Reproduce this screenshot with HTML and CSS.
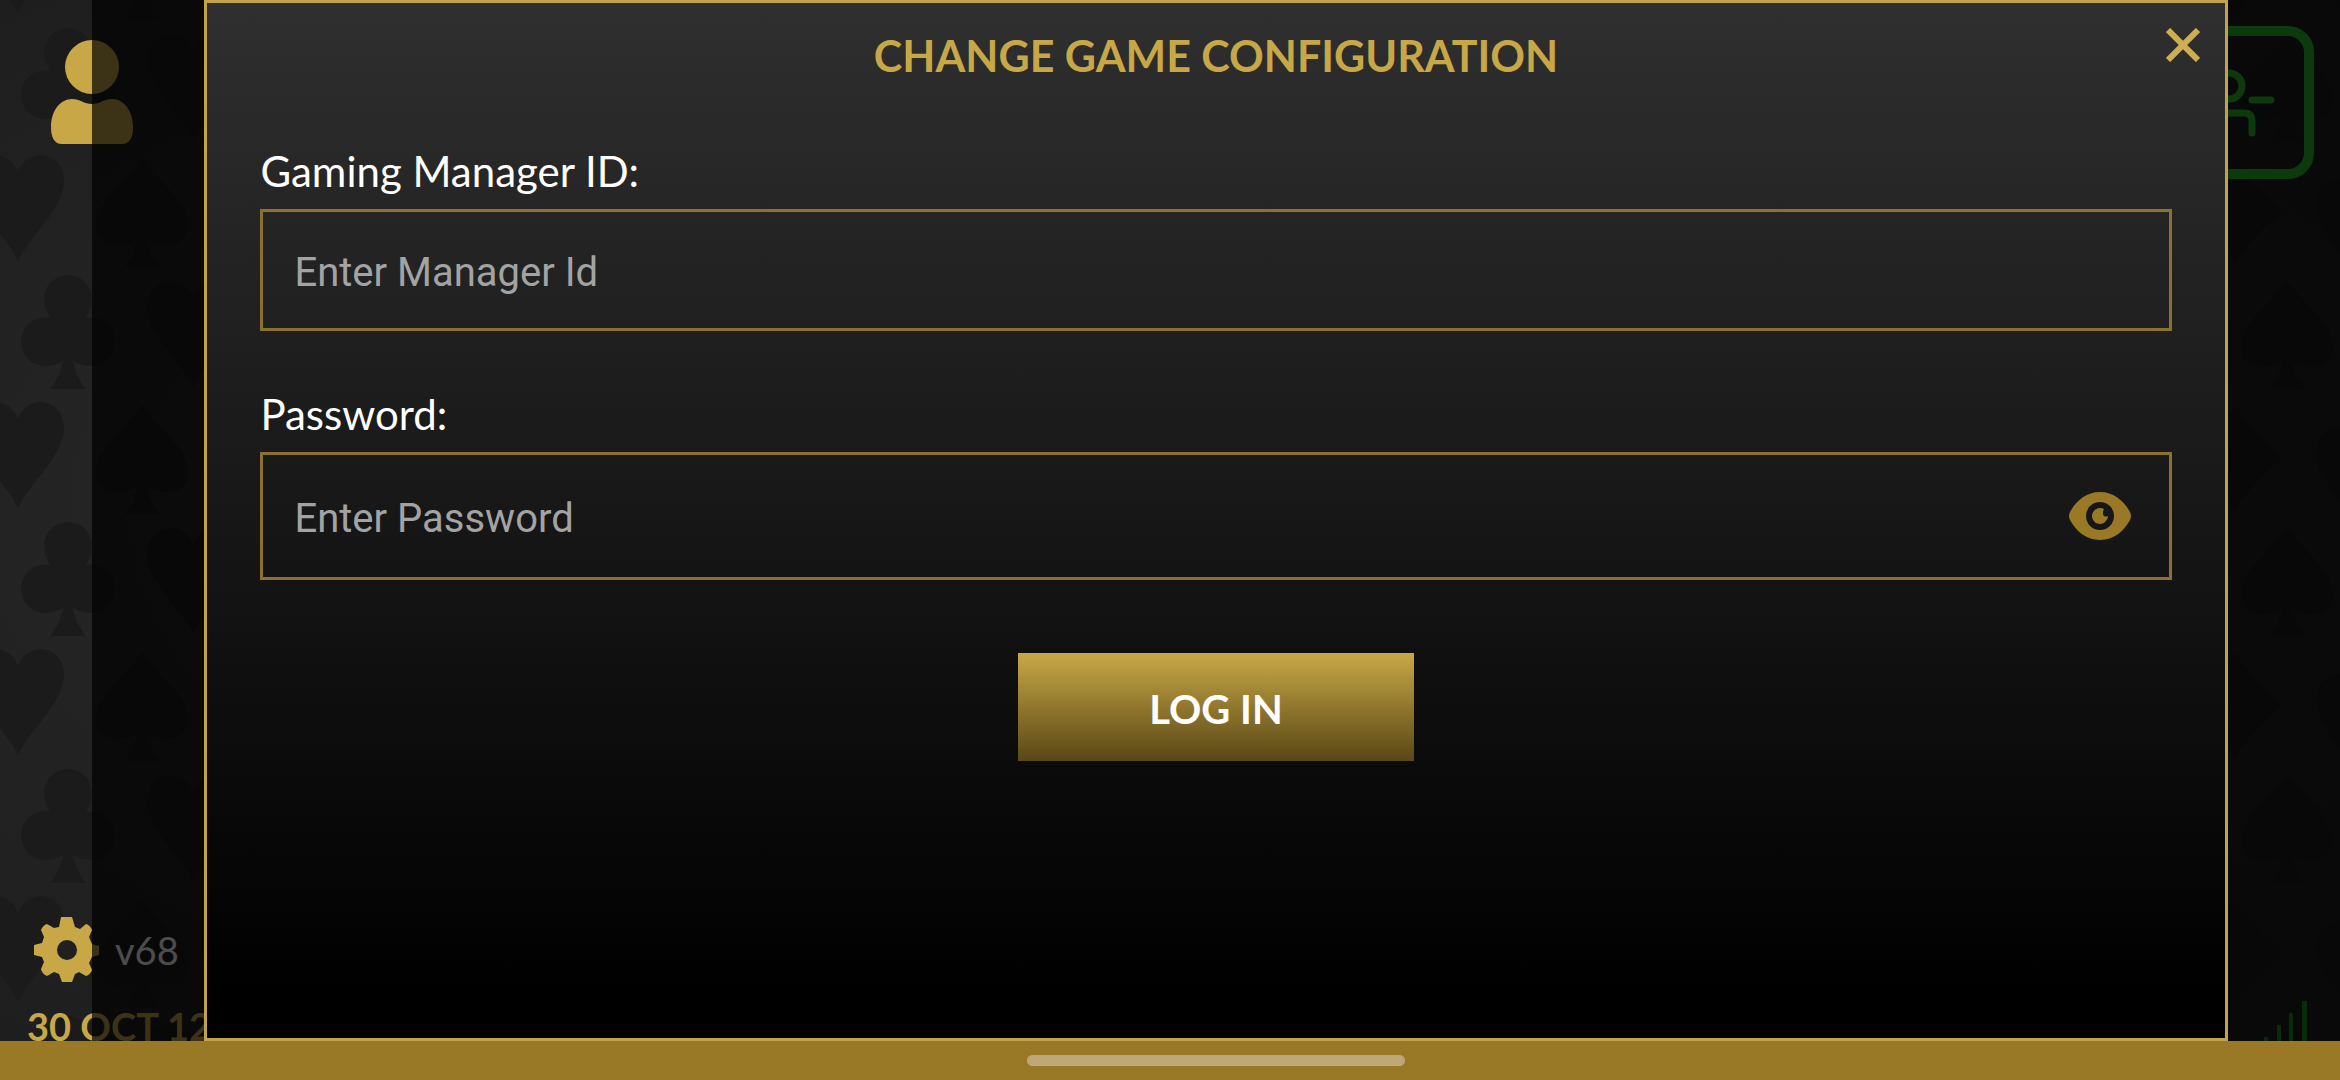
FILE: index.html
```html
<!DOCTYPE html>
<html lang="en">
<head>
    <meta charset="UTF-8">
    <meta name="viewport" content="width=device-width, initial-scale=1.0">
    <title>Change Game Configuration</title>
    <link rel="stylesheet" href="styles.css">
</head>
<body>
    <div class="screen">
        <!-- card suits on the table background -->
        <svg class="suits suits-left" aria-hidden="true">
            <defs>
                <path id="heart" d="M0 107C-10 82 -46 55 -46 26C-46 8 -34 0 -22 0C-12 0 -3 7 0 17C3 7 12 0 22 0C34 0 46 8 46 26C46 55 10 82 0 107Z"/>
                <path id="spade" d="M0 0C12 22 46 42 46 68C46 82 36 88 26 88C17 88 10 86 5 82C7 94 12 104 18 110H-18C-12 104 -7 94 -5 82C-10 86 -17 88 -26 88C-36 88 -46 82 -46 68C-46 42 -12 22 0 0Z"/>
                <path id="club" d="M0 0C13 0 24 10 24 24C24 33 20 39 18 43C34 40 47 51 47 66C47 81 36 91 23 91C14 91 9 88 5 86C7 98 12 106 18 114H-18C-12 106 -7 98 -5 86C-9 88 -14 91 -23 91C-36 91 -47 81 -47 66C-47 51 -34 40 -18 43C-20 39 -24 33 -24 24C-24 10 -13 0 0 0Z"/>
                <path id="diamond" d="M0 0C12 20 30 38 48 53C30 68 12 86 0 106C-12 86 -30 68 -48 53C-30 38 -12 20 0 0Z"/>
                <pattern id="suitsLeft" width="250" height="247" y="150" patternUnits="userSpaceOnUse">
                    <use href="#heart" x="18" y="5"/>
                    <use href="#spade" x="142" y="7"/>
                    <use href="#club" x="68" y="125"/>
                    <use href="#heart" x="193" y="131"/>
                </pattern>
                <pattern id="suitsRight" width="250" height="247" y="150" patternUnits="userSpaceOnUse">
                    <use href="#diamond" x="15" y="8"/>
                    <use href="#spade" x="67" y="129"/>
                    <use href="#heart" x="142" y="30"/>
                </pattern>
            </defs>
            <rect width="100%" height="100%" fill="url(#suitsLeft)"/>
        </svg>
        <svg class="suits suits-right" aria-hidden="true">
            <rect width="100%" height="100%" fill="url(#suitsRight)"/>
        </svg>

        <div class="top-bar">
            <svg class="user" viewBox="0 0 84 106">
                <circle cx="42" cy="28" r="27"/>
                <path d="M22 60C30 60 34 65 42 65C50 65 54 60 62 60C74 60 83 72 83 88C83 98 80 105 72 105H12C4 105 1 98 1 88C1 72 10 60 22 60Z"/>
            </svg>
            <div class="seat">
                <svg viewBox="0 0 80 70">
                    <circle cx="32" cy="18" r="13"/>
                    <path d="M55 32H74M9 65V53Q9 45 17 45H47Q55 45 55 53V65"/>
                </svg>
            </div>
        </div>

        <div class="bottom-bar">
            <div class="status">
                <div class="version">
                    <svg class="gear" viewBox="-33 -33 66 66">
                        <path fill-rule="evenodd" d="M-6 -33H5L8 -23L13 -21L19 -26Q23 -25 25 -20L22 -13L25 -6L32 -4V5L25 7L22 13L25 20Q23 25 19 26L12 22L8 24L5 32H-5L-8 24L-13 22L-20 26Q-25 24 -26 19L-23 12L-25 7L-33 5V-5L-25 -7L-23 -13L-26 -20Q-24 -25 -20 -26L-13 -22L-8 -23ZM0 -10A10 10 0 1 0 0 10A10 10 0 1 0 0 -10Z"/>
                    </svg>
                    <span>v68</span>
                </div>
                <div class="date">30 OCT 12</div>
            </div>
            <svg class="signal" viewBox="0 0 43 40">
                <path d="M0 36h4v4h-4zM13 24h4v16h-4zM25 12h4v28h-4zM38 0h5v40h-5z"/>
            </svg>
        </div>

        <div class="overlay">
            <div class="modal" role="dialog" aria-labelledby="modalTitle">
                <button class="close" type="button" aria-label="Close">
                    <svg viewBox="0 0 34 34"><path d="M2 2L32 32M32 2L2 32"/></svg>
                </button>
                <h1 id="modalTitle">CHANGE GAME CONFIGURATION</h1>
                <form>
                    <label for="managerId">Gaming Manager ID:</label>
                    <div class="field">
                        <input type="text" id="managerId" placeholder="Enter Manager Id">
                    </div>
                    <label for="password">Password:</label>
                    <div class="field field-password">
                        <input type="password" id="password" placeholder="Enter Password">
                        <button class="eye" type="button" aria-label="Show password">
                            <svg viewBox="0 0 62 48">
                                <path fill-rule="evenodd" d="M31 0C45 0 55 9 61 20Q63 24 61 28C55 39 45 48 31 48C17 48 7 39 1 28Q-1 24 1 20C7 9 17 0 31 0ZM31 10A14 14 0 1 0 31 38A14 14 0 1 0 31 10Z"/>
                                <path d="M35 17A8 8 0 1 0 39 24Q34 26 34 21Q34 18 35 17Z"/>
                            </svg>
                        </button>
                    </div>
                    <button class="login" type="button">LOG IN</button>
                </form>
            </div>
        </div>
    </div>
    <div class="nav-bar">
        <div class="handle"></div>
    </div>
</body>
</html>
```

FILE: styles.css
```css
* {
    box-sizing: border-box;
}
body {
    margin: 0;
    min-height: 100vh;
    display: flex;
    flex-direction: column;
    font-family: Lato, "Open Sans", sans-serif;
    background: #1e1e1e;
    color: white;
}
button {
    padding: 0;
    border: none;
    background: none;
    font-family: inherit;
    cursor: pointer;
}
svg {
    display: block;
}
.screen {
    position: relative;
    flex: 1;
    display: flex;
    flex-direction: column;
    justify-content: space-between;
    background: radial-gradient(#2f2f2f, #1e1e1e);
}
.suits {
    position: absolute;
    top: 0;
    height: 100%;
    fill: #1b1b1b;
}
.suits-left {
    left: 0;
    width: 250px;
}
.suits-right {
    right: 0;
    width: 120px;
}
.top-bar {
    position: relative;
    display: flex;
    justify-content: space-between;
    align-items: flex-start;
    padding: 26px 26px 0 50px;
}
.user {
    width: 84px;
    height: 106px;
    margin-top: 13px;
    fill: #c8a846;
}
.seat {
    display: flex;
    justify-content: center;
    align-items: center;
    width: 154px;
    height: 153px;
    border: 10px solid #2bc128;
    border-radius: 26px;
}
.seat svg {
    width: 80px;
    height: 70px;
    fill: none;
    stroke: #2bc128;
    stroke-width: 7;
    stroke-linecap: round;
}
.bottom-bar {
    position: relative;
    display: flex;
    justify-content: space-between;
    align-items: flex-end;
    padding: 0 33px 0 27px;
}
.version {
    display: flex;
    align-items: center;
    gap: 15px;
    margin-left: 7px;
    font-size: 38px;
    line-height: 66px;
}
.gear {
    width: 66px;
    height: 66px;
    fill: #c8a846;
}
.date {
    margin-top: 26px;
    font-size: 38px;
    font-weight: bold;
    line-height: 34px;
    color: #c8a846;
    height: 32px;
}
.signal {
    width: 43px;
    height: 40px;
    fill: #249024;
}
.overlay {
    position: absolute;
    top: 0;
    right: 0;
    bottom: 0;
    left: 92px;
    display: flex;
    justify-content: center;
    background: rgba(0, 0, 0, 0.7);
}
.modal {
    position: relative;
    width: 90%;
    padding: 28px 53px;
    border: 3px solid #c2a24a;
    background: linear-gradient(#2f2f2f, #000 96%);
}
h1 {
    margin: 0 0 66px;
    font-size: 43px;
    line-height: 50px;
    text-align: center;
    color: #c8a846;
}
.close {
    position: absolute;
    top: 25px;
    right: 25px;
}
.close svg {
    width: 34px;
    height: 34px;
    fill: none;
    stroke: #ceae50;
    stroke-width: 6;
}
form {
    display: flex;
    flex-direction: column;
}
label {
    margin-bottom: 14px;
    font-size: 42px;
    line-height: 48px;
}
.field {
    display: flex;
    align-items: center;
    height: 122px;
    margin-bottom: 59px;
    padding: 0 38px 0 31px;
    border: 3px solid #8b7030;
}
.field-password {
    height: 128px;
    margin-bottom: 73px;
}
input {
    flex: 1;
    min-width: 0;
    padding: 6px 0 0;
    border: none;
    outline: none;
    background: none;
    font-family: Roboto, sans-serif;
    font-size: 40px;
    line-height: 48px;
    color: white;
}
input::placeholder {
    color: #a3a3a3;
    opacity: 1;
}
.eye svg {
    width: 62px;
    height: 48px;
    fill: #997926;
}
.login {
    align-self: center;
    width: 396px;
    height: 108px;
    padding-top: 4px;
    background: linear-gradient(#c8a846, #594716);
    font-size: 40px;
    font-weight: bold;
    color: white;
}
.nav-bar {
    display: flex;
    justify-content: center;
    align-items: center;
    height: 39px;
    padding-left: 92px;
    background: #997926;
}
.handle {
    width: 378px;
    height: 11px;
    border-radius: 6px;
    background: #bfa878;
}
```
